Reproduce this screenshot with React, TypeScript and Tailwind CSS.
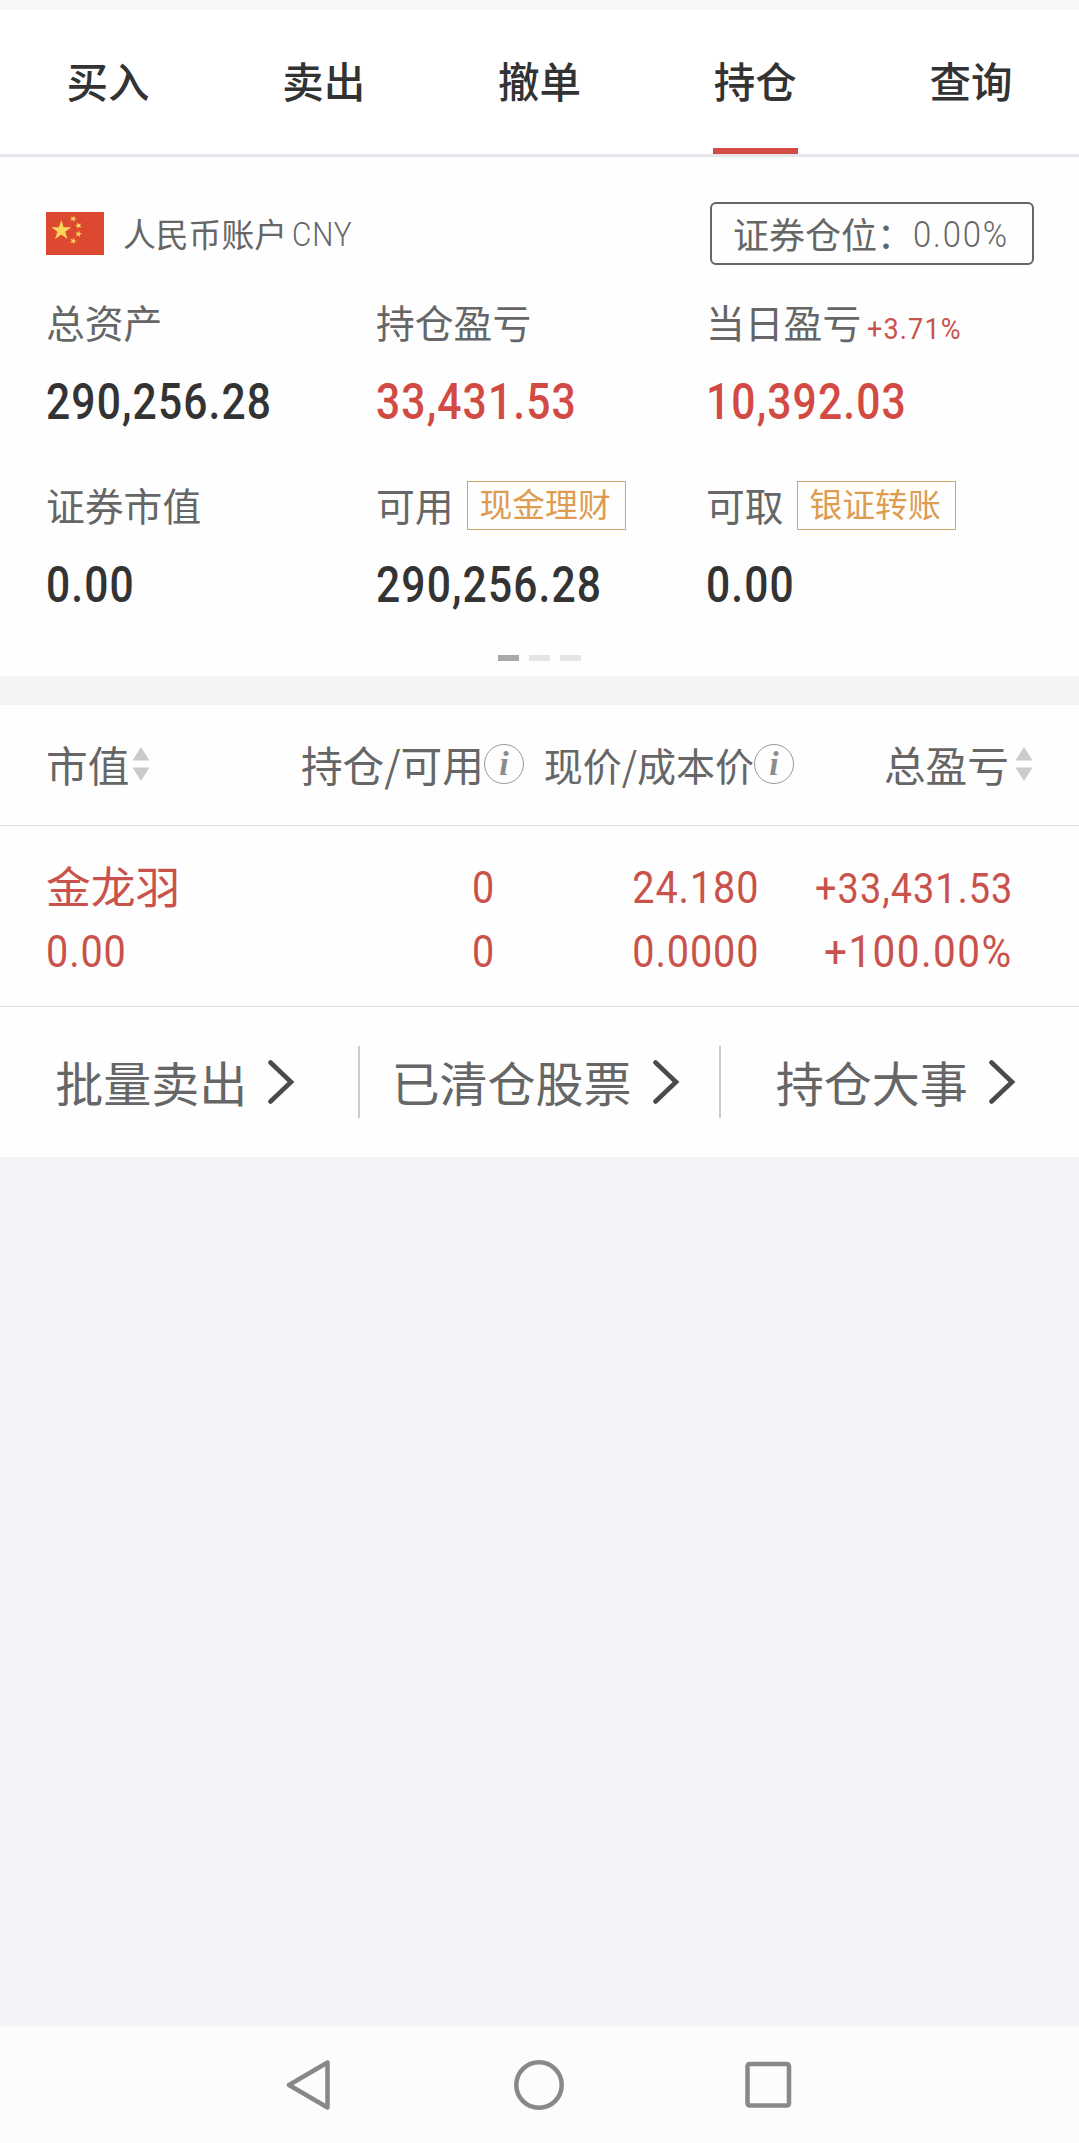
import React, { useState } from 'react';

const tabs = ['买入', '卖出', '撤单', '持仓', '查询'];
const actions = ['批量卖出', '已清仓股票', '持仓大事'];

interface NumProps {
    children: React.ReactNode;
    className?: string;
}

const Num: React.FC<NumProps> = ({ children, className = '' }) => (
    <span className={`inline-block whitespace-nowrap font-['Roboto'] ${className}`}>{children}</span>
);

const star = '0,-10 2.25,-3.1 9.5,-3.1 3.65,1.2 5.9,8.1 0,3.85 -5.9,8.1 -3.65,1.2 -9.5,-3.1 -2.25,-3.1';

const Flag: React.FC = () => (
    <svg width="58" height="43" viewBox="0 0 58 43">
        <rect width="58" height="43" fill="#dd4930" />
        <g fill="#fbd65c">
            <polygon points={star} transform="translate(15.3 18.5) scale(1.05)" />
            <polygon points={star} transform="translate(27.2 6.8) rotate(20) scale(0.36)" />
            <polygon points={star} transform="translate(32.5 13.6) rotate(-20) scale(0.36)" />
            <polygon points={star} transform="translate(32.5 22) rotate(10) scale(0.36)" />
            <polygon points={star} transform="translate(27.2 29) rotate(20) scale(0.36)" />
        </g>
    </svg>
);

const SortIcon: React.FC = () => (
    <svg width="18" height="34" viewBox="0 0 18 34" fill="#cacaca" className="shrink-0">
        <path d="M9 0 17.5 13.5H.5Z" />
        <path d="M9 34 17.5 20.5H.5Z" />
    </svg>
);

const InfoIcon: React.FC = () => (
    <span className="flex size-10 shrink-0 items-center justify-center rounded-full border-[1.5px] border-[#999] font-['Liberation_Serif'] text-[34px] leading-none font-bold text-[#8c8c8c] italic">
        i
    </span>
);

const Chevron: React.FC = () => (
    <svg width="27" height="44" viewBox="0 0 27 44" fill="none" stroke="#4a4a4a" strokeWidth="4.6" className="shrink-0">
        <path d="M2.5 2.5 23 22 2.5 41.5" strokeLinecap="round" />
    </svg>
);

interface StatProps {
    label: string;
    value: string;
    tag?: string;
    rate?: string;
    red?: boolean;
}

const Stat: React.FC<StatProps> = ({ label, value, tag, rate, red }) => (
    <div className="h-[183px]">
        <div className="flex h-12 items-center">
            <span className="pb-px text-[38.8px] leading-[47px] text-[#666]">{label}</span>
            {tag && (
                <span className="ml-[13px] flex h-[49px] w-[159px] shrink-0 items-center justify-center border-[1.5px] border-[#d3a36c] pr-[2px] pb-[3px] text-[32.8px] leading-none text-[#dd9c50]">
                    {tag}
                </span>
            )}
            {rate && (
                <Num className="mt-[13px] ml-[6px] origin-left scale-x-[0.9] text-[30px] leading-none tracking-[1.3px] text-[#c8534c]">
                    {rate}
                </Num>
            )}
        </div>
        <Num
            className={`mt-[31px] origin-left scale-x-[0.86] text-[49.5px] leading-[50px] font-medium tracking-[1.3px] ${
                red ? 'text-[#d24a43]' : 'text-[#333]'
            }`}
        >
            {value}
        </Num>
    </div>
);

const App: React.FC = () => {
    const [activeTab, setActiveTab] = useState('持仓');

    return (
        <div className="flex h-[2143px] w-[1079px] flex-col overflow-hidden bg-[#f3f4f8] font-['Noto_Sans_CJK_SC',sans-serif] text-[#666]">
            <div className="h-[10px] bg-[#f7f7f7]" />
            <nav className="flex h-[147px] border-b-[3px] border-[#e5e5eb] bg-white">
                {tabs.map((tab) => (
                    <button
                        key={tab}
                        onClick={() => setActiveTab(tab)}
                        className="flex flex-1 flex-col items-center justify-between pt-10 text-[41.5px] leading-[60px] font-medium text-[#333]"
                    >
                        {tab}
                        {activeTab === tab && <span className="h-[6px] w-[85px] bg-[#d24c46]" />}
                    </button>
                ))}
            </nav>

            <section className="flex h-[519px] flex-col bg-[#fefefe] pt-[45px]">
                <div className="flex h-[63px] items-center justify-between pr-[45px] pl-[46px]">
                    <div className="flex items-center">
                        <Flag />
                        <span className="ml-[19px] pb-px text-[32.8px] leading-[48px]">人民币账户</span>
                        <Num className="mt-[3px] ml-[5px] origin-left scale-x-[0.9] text-[33px] leading-[48px] font-light tracking-[1px]">CNY</Num>
                    </div>
                    <div className="flex h-[63px] w-[324px] items-center rounded-md border-2 border-[#666] pl-[21px]">
                        <span className="pb-px text-[36px] leading-[56px]">证券仓位：</span>
                        <Num className="mt-[3px] origin-left scale-x-[0.9] text-[36.5px] leading-[56px] font-light tracking-[2px]">0.00%</Num>
                    </div>
                </div>
                <div className="mt-[33px] grid grid-cols-[330px_330px_1fr] pl-[46px]">
                    <Stat label="总资产" value="290,256.28" />
                    <Stat label="持仓盈亏" value="33,431.53" red />
                    <Stat label="当日盈亏" value="10,392.03" rate="+3.71%" red />
                    <Stat label="证券市值" value="0.00" />
                    <Stat label="可用" value="290,256.28" tag="现金理财" />
                    <Stat label="可取" value="0.00" tag="银证转账" />
                </div>
                <div className="-mt-[9px] flex justify-center gap-[10px]">
                    <span className="h-[6px] w-[21px] bg-[#aaa]" />
                    <span className="h-[6px] w-[21px] bg-[#e5e5e5]" />
                    <span className="h-[6px] w-[21px] bg-[#e5e5e5]" />
                </div>
            </section>

            <div className="h-[29px] bg-[#f4f4f4]" />

            <section className="bg-[#fefefe]">
                <div className="grid h-[121px] grid-cols-[232px_246px_270px_239px] items-center border-b border-[#e3e3e3] pb-[2px] pl-[46px] text-[41.7px] leading-[60px] whitespace-nowrap">
                    <div className="flex items-center">
                        市值
                        <span className="ml-[3px]"><SortIcon /></span>
                    </div>
                    <div className="flex items-center justify-end">
                        持仓/可用
                        <InfoIcon />
                    </div>
                    <div className="flex items-center justify-end text-[39px]">
                        现价/成本价
                        <InfoIcon />
                    </div>
                    <div className="flex items-center justify-end">
                        总盈亏
                        <span className="ml-[6px]"><SortIcon /></span>
                    </div>
                </div>
                <div className="grid h-[181px] grid-cols-[232px_246px_270px_239px] border-b border-[#e3e3e3] pt-[30px] pl-[46px] text-[45px] leading-[64px] text-[#c9524b]">
                    <div className="flex flex-col">
                        <span className="-mt-[3px] mb-[3px] text-[44.8px]">金龙羽</span>
                        <Num className="origin-left scale-x-[0.88] tracking-[1px]">0.00</Num>
                    </div>
                    <div className="flex flex-col items-end pr-[30px]">
                        <Num className="origin-right scale-x-[0.88]">0</Num>
                        <Num className="origin-right scale-x-[0.88]">0</Num>
                    </div>
                    <div className="flex flex-col items-end pr-[35px]">
                        <Num className="origin-right scale-x-[0.88] tracking-[1px]">24.180</Num>
                        <Num className="origin-right scale-x-[0.88] tracking-[1px]">0.0000</Num>
                    </div>
                    <div className="flex flex-col items-end pr-[20px]">
                        <Num className="origin-right scale-x-[0.88] pt-px text-[43px] leading-[63px] tracking-[1.2px]">+33,431.53</Num>
                        <Num className="origin-right scale-x-[0.9] tracking-[1.6px]">+100.00%</Num>
                    </div>
                </div>
                <div className="flex h-[150px] items-center">
                    {actions.map((action, idx) => (
                        <React.Fragment key={action}>
                            {idx > 0 && <span className="h-[72px] w-[2px] bg-[#ccc]" />}
                            <button className="flex flex-1 items-center justify-center pr-2 text-[48px] leading-[70px]">
                                <span className="pb-[3px]">{action}</span>
                                <span className="ml-[21px]"><Chevron /></span>
                            </button>
                        </React.Fragment>
                    ))}
                </div>
            </section>

            <footer className="mt-auto flex h-[116px] items-center bg-[#fcfcfc] pl-[286px]">
                <svg width="510" height="52" viewBox="0 0 510 52" fill="none" stroke="#888" strokeWidth="4.5" strokeLinejoin="round">
                    <path d="M41.5 3.5V48.5L3 26Z" />
                    <circle cx="253" cy="26" r="22.7" />
                    <rect x="461.500" y="5" width="41.500" height="41.500" rx="2" />
                </svg>
            </footer>
        </div>
    );
};

export default App;
